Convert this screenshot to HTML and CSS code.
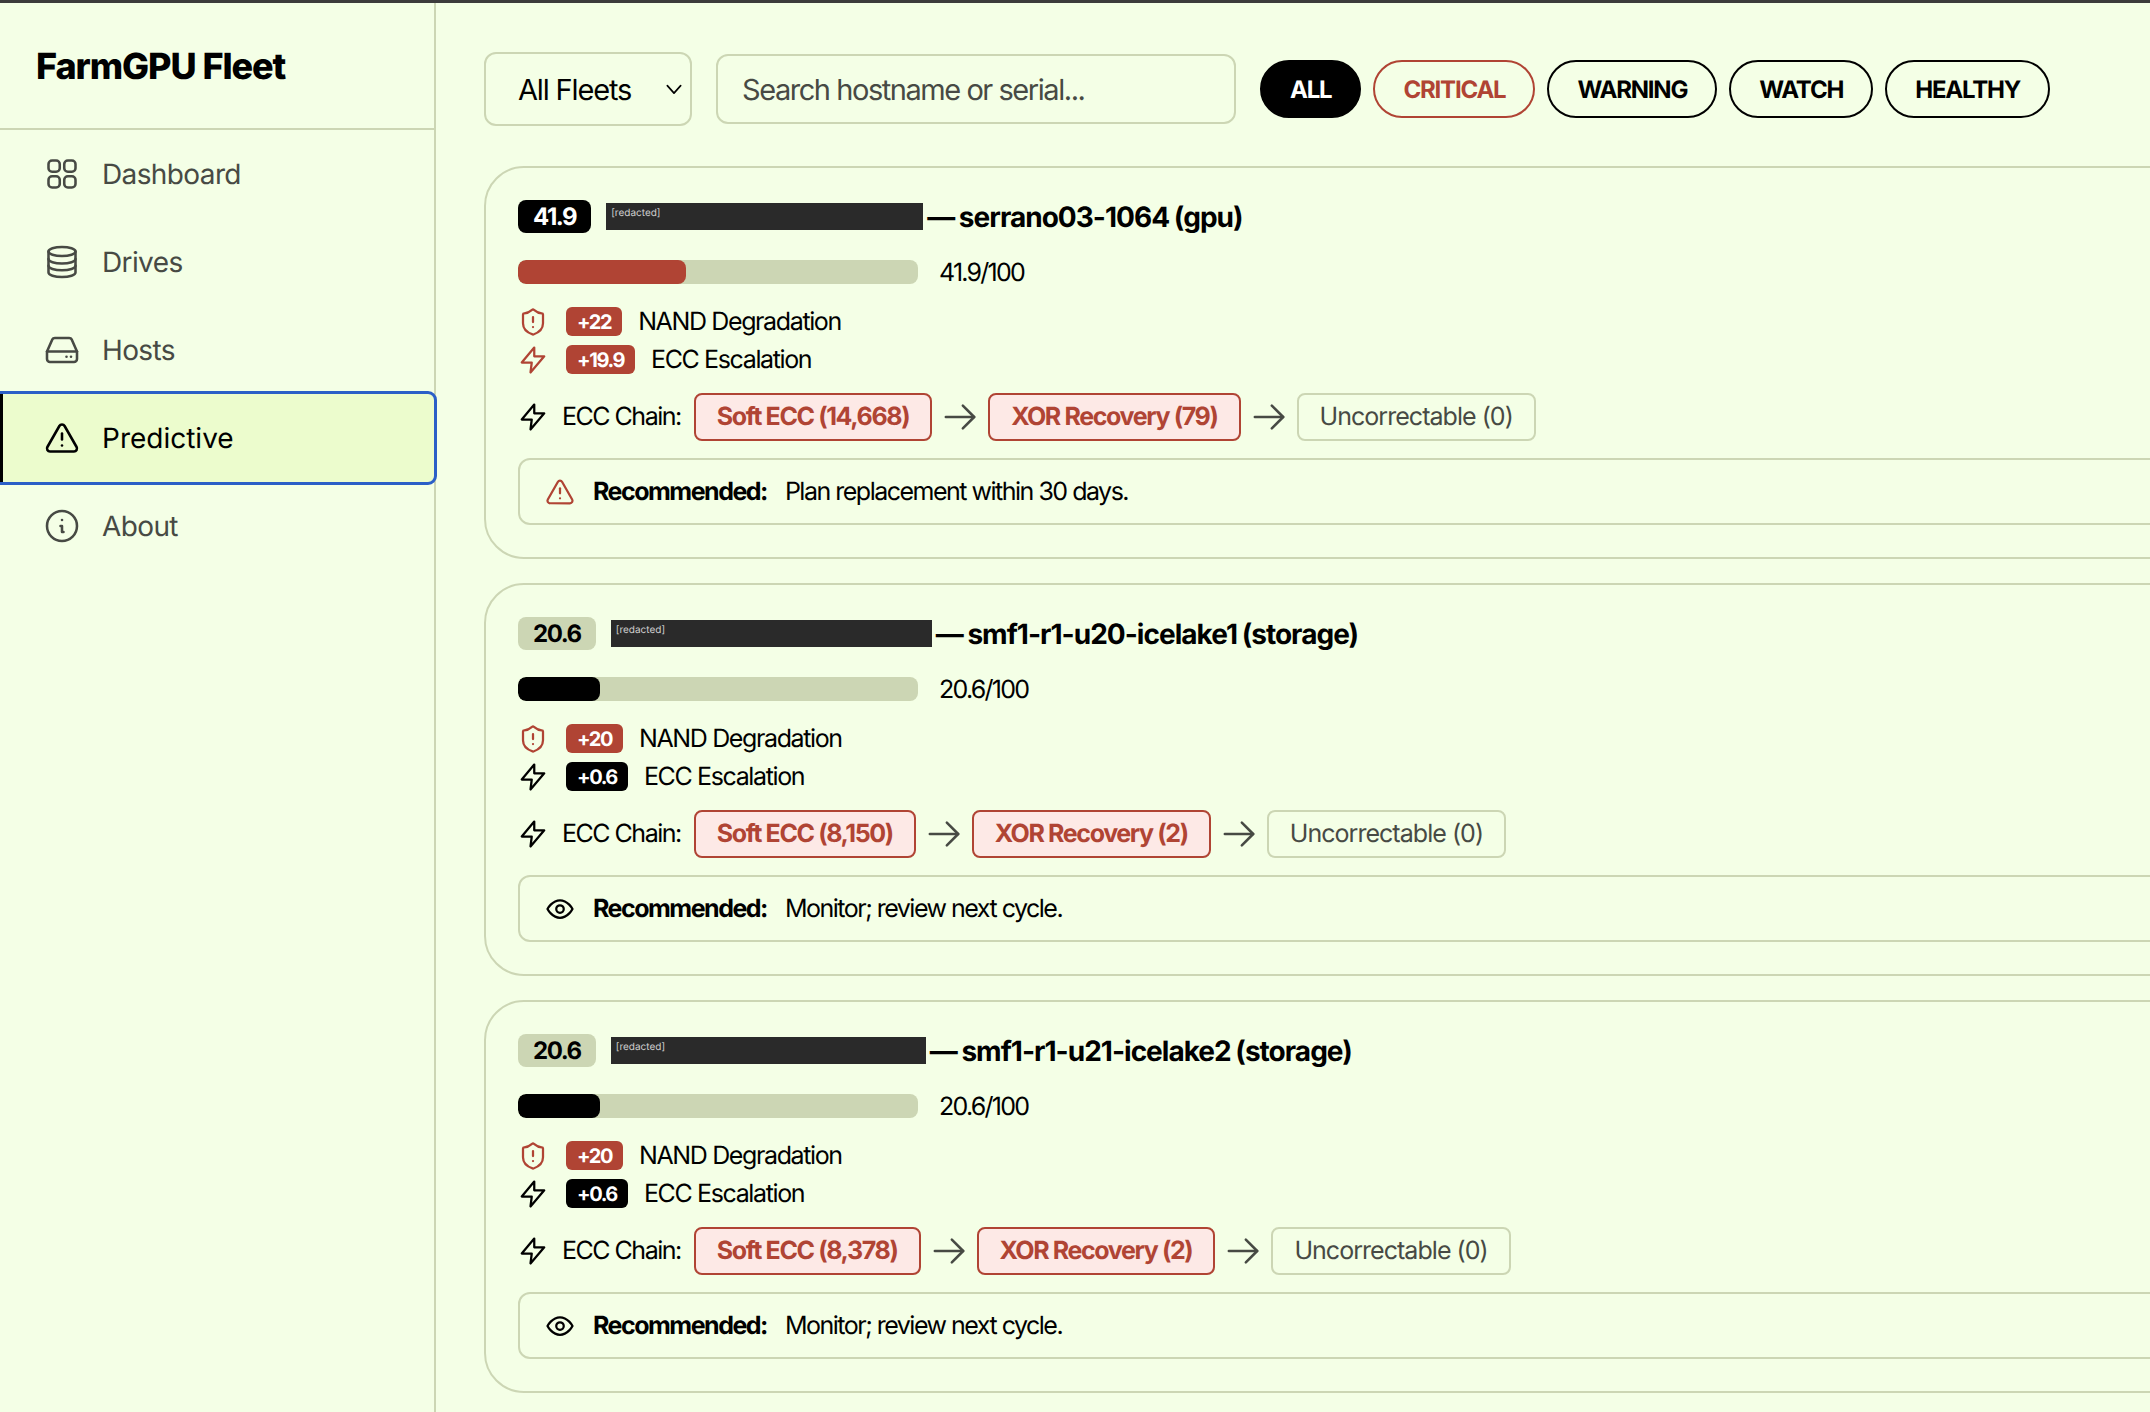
FILE: index.html
```html
<!DOCTYPE html>
<html lang="en">
<head>
<meta charset="utf-8">
<title>FarmGPU Fleet</title>
<link rel="stylesheet" href="styles.css">
</head>
<body>
<svg class="sprite" aria-hidden="true">
  <symbol id="i-grid" viewBox="0 0 24 24"><rect x="3" y="3" width="7.5" height="7.5" rx="2.4"/><rect x="13.5" y="3" width="7.5" height="7.5" rx="2.4"/><rect x="3" y="13.5" width="7.5" height="7.5" rx="2.4"/><rect x="13.5" y="13.5" width="7.5" height="7.5" rx="2.4"/></symbol>
  <symbol id="i-db" viewBox="0 0 24 24"><ellipse cx="12" cy="5" rx="9" ry="3"/><path d="M3 5v14a9 3 0 0 0 18 0V5"/><path d="M3 10a9 3 0 0 0 18 0"/><path d="M3 14.5a9 3 0 0 0 18 0"/></symbol>
  <symbol id="i-drive" viewBox="0 0 24 24"><path d="M22 13H2"/><path d="M5.45 5.11 2 13v5a2 2 0 0 0 2 2h16a2 2 0 0 0 2-2v-5l-3.45-7.89A2 2 0 0 0 16.76 4H7.24a2 2 0 0 0-1.79 1.11z"/><path d="M15 16.5h.01"/><path d="M18 16.5h.01"/></symbol>
  <symbol id="i-tri" viewBox="0 0 24 24"><path d="m21.73 18-8-14a2 2 0 0 0-3.48 0l-8 14A2 2 0 0 0 4 21h16a2 2 0 0 0 1.73-3"/><path d="M12 9v4"/><path d="M12 17h.01"/></symbol>
  <symbol id="i-info" viewBox="0 0 24 24"><circle cx="12" cy="12" r="10"/><path d="M11 12h1v4h1"/><path d="M12 8h.01"/></symbol>
  <symbol id="i-shield" viewBox="0 0 24 24"><path d="M20 13c0 5-3.5 7.5-7.66 8.95a1 1 0 0 1-.67-.01C7.5 20.5 4 18 4 13V6a1 1 0 0 1 1-1c2 0 4.5-1.2 6.24-2.72a1.17 1.17 0 0 1 1.52 0C14.51 3.81 17 5 19 5a1 1 0 0 1 1 1z"/><path d="M12 8v4"/><path d="M12 16h.01"/></symbol>
  <symbol id="i-zap" viewBox="0 0 24 24"><path d="M13 2 3 14h8l-1 8 11-13h-8z"/></symbol>
  <symbol id="i-arrow" viewBox="0 0 24 24"><path d="M2 12h20"/><path d="m14 4 8 8-8 8"/></symbol>
  <symbol id="i-eye" viewBox="0 0 24 24"><path d="M2 12s3.6-7 10-7 10 7 10 7-3.6 7-10 7-10-7-10-7Z"/><circle cx="12" cy="12" r="3"/></symbol>
  <symbol id="i-chev" viewBox="0 0 24 24"><path d="m4 8 8 9 8-9"/></symbol>
</svg>
<div class="app">
  <aside class="sidebar">
    <h1 class="brand">FarmGPU Fleet</h1>
    <nav class="nav">
      <a class="nav-item"><svg class="icon nav-icon"><use href="#i-grid"/></svg>Dashboard</a>
      <a class="nav-item"><svg class="icon nav-icon"><use href="#i-db"/></svg>Drives</a>
      <a class="nav-item"><svg class="icon nav-icon"><use href="#i-drive"/></svg>Hosts</a>
      <a class="nav-item active"><svg class="icon nav-icon"><use href="#i-tri"/></svg>Predictive</a>
      <a class="nav-item"><svg class="icon nav-icon"><use href="#i-info"/></svg>About</a>
    </nav>
  </aside>
  <main class="main">
    <div class="filters">
      <div class="select"><span>All Fleets</span><svg class="icon chev"><use href="#i-chev"/></svg></div>
      <div class="search">Search hostname or serial...</div>
      <div class="pills">
        <span class="pill pill-on">ALL</span>
        <span class="pill pill-crit">CRITICAL</span>
        <span class="pill">WARNING</span>
        <span class="pill">WATCH</span>
        <span class="pill">HEALTHY</span>
      </div>
    </div>

    <section class="card">
      <div class="head">
        <span class="score score-crit">41.9</span>
        <span class="redact w1">[redacted]</span>
        <span class="host">— serrano03-1064 (gpu)</span>
      </div>
      <div class="meter">
        <div class="track"><div class="fill fill-crit" style="width:41.9%"></div></div>
        <span class="meter-val">41.9/100</span>
      </div>
      <div class="factor"><svg class="icon ic-red"><use href="#i-shield"/></svg><span class="delta">+22</span><span>NAND Degradation</span></div>
      <div class="factor f2"><svg class="icon ic-red"><use href="#i-zap"/></svg><span class="delta">+19.9</span><span>ECC Escalation</span></div>
      <div class="chain">
        <svg class="icon"><use href="#i-zap"/></svg><span class="chain-label">ECC Chain:</span>
        <span class="step step-bad">Soft ECC (14,668)</span><svg class="icon ic-arrow"><use href="#i-arrow"/></svg>
        <span class="step step-bad">XOR Recovery (79)</span><svg class="icon ic-arrow"><use href="#i-arrow"/></svg>
        <span class="step">Uncorrectable (0)</span>
      </div>
      <div class="rec"><svg class="icon ic-red"><use href="#i-tri"/></svg><b>Recommended:</b><span>Plan replacement within 30 days.</span></div>
    </section>

    <section class="card">
      <div class="head">
        <span class="score">20.6</span>
        <span class="redact w2">[redacted]</span>
        <span class="host">— smf1-r1-u20-icelake1 (storage)</span>
      </div>
      <div class="meter">
        <div class="track"><div class="fill" style="width:20.6%"></div></div>
        <span class="meter-val">20.6/100</span>
      </div>
      <div class="factor"><svg class="icon ic-red"><use href="#i-shield"/></svg><span class="delta">+20</span><span>NAND Degradation</span></div>
      <div class="factor f2"><svg class="icon"><use href="#i-zap"/></svg><span class="delta delta-k">+0.6</span><span>ECC Escalation</span></div>
      <div class="chain">
        <svg class="icon"><use href="#i-zap"/></svg><span class="chain-label">ECC Chain:</span>
        <span class="step step-bad">Soft ECC (8,150)</span><svg class="icon ic-arrow"><use href="#i-arrow"/></svg>
        <span class="step step-bad">XOR Recovery (2)</span><svg class="icon ic-arrow"><use href="#i-arrow"/></svg>
        <span class="step">Uncorrectable (0)</span>
      </div>
      <div class="rec"><svg class="icon"><use href="#i-eye"/></svg><b>Recommended:</b><span>Monitor; review next cycle.</span></div>
    </section>

    <section class="card">
      <div class="head">
        <span class="score">20.6</span>
        <span class="redact w3">[redacted]</span>
        <span class="host">— smf1-r1-u21-icelake2 (storage)</span>
      </div>
      <div class="meter">
        <div class="track"><div class="fill" style="width:20.6%"></div></div>
        <span class="meter-val">20.6/100</span>
      </div>
      <div class="factor"><svg class="icon ic-red"><use href="#i-shield"/></svg><span class="delta">+20</span><span>NAND Degradation</span></div>
      <div class="factor f2"><svg class="icon"><use href="#i-zap"/></svg><span class="delta delta-k">+0.6</span><span>ECC Escalation</span></div>
      <div class="chain">
        <svg class="icon"><use href="#i-zap"/></svg><span class="chain-label">ECC Chain:</span>
        <span class="step step-bad">Soft ECC (8,378)</span><svg class="icon ic-arrow"><use href="#i-arrow"/></svg>
        <span class="step step-bad">XOR Recovery (2)</span><svg class="icon ic-arrow"><use href="#i-arrow"/></svg>
        <span class="step">Uncorrectable (0)</span>
      </div>
      <div class="rec"><svg class="icon"><use href="#i-eye"/></svg><b>Recommended:</b><span>Monitor; review next cycle.</span></div>
    </section>
  </main>
</div>
</body>
</html>
```
FILE: styles.css
```css
* { box-sizing: border-box; }
html, body { margin: 0; height: 100%; overflow: hidden; }
body {
  background: #f4ffe6;
  color: #000;
  font-family: Inter, "Noto Sans", sans-serif;
  letter-spacing: -0.06em;
  text-rendering: geometricPrecision;
  border-top: 3px solid #3c3c3c;
}
.sprite { display: none; }
.icon {
  width: 30px; height: 30px; flex: none;
  fill: none; stroke: currentColor; stroke-width: 1.8; stroke-linecap: round; stroke-linejoin: round;
}
.app { display: flex; height: 100%; }
.sidebar { width: 436px; flex: none; border-right: 2px solid #ccd6b4; }
.brand {
  margin: 0; height: 127px; padding: 0 0 0 36px;
  display: flex; align-items: center;
  font-size: 36px; font-weight: 800; letter-spacing: -0.03em;
  border-bottom: 2px solid #ccd6b4;
}
.nav { display: flex; flex-direction: column; }
.nav-item {
  height: 88px; padding-left: 44px; display: flex; align-items: center; gap: 22px;
  font-size: 28px; letter-spacing: -0.022em; color: #474a44;
}
.nav-icon { width: 36px; height: 36px; stroke-width: 1.7; }
.nav-item.active {
  background: #ecfccd; color: #000;
  box-shadow: inset 3px 0 0 #000;
  outline: 3px solid #2b5fc7;
  border-radius: 0 6px 6px 0;
  position: relative; width: 434px;
  letter-spacing: 0;
}
.main { flex: none; width: 1900px; padding: 49px 0 0 48px; }
.filters { display: flex; align-items: center; gap: 24px; margin-bottom: 40px; }
.select {
  width: 208px; height: 74px; padding: 0 6px 0 32px;
  border: 2px solid #ccd6b4; border-radius: 12px;
  display: flex; align-items: center; justify-content: space-between;
  font-size: 29px; letter-spacing: -0.04em;
}
.chev { width: 20px; height: 20px; stroke-width: 2; }
.search {
  width: 520px; height: 70px; padding: 0 24px;
  border: 2px solid #ccd6b4; border-radius: 12px;
  display: flex; align-items: center;
  font-size: 29px; letter-spacing: -0.05em; color: #474a44;
}
.pills { display: flex; gap: 12px; }
.pill {
  height: 58px; padding: 0 28px;
  border: 2px solid #000; border-radius: 29px;
  display: flex; align-items: center;
  font-size: 24px; font-weight: 700; letter-spacing: -0.05em;
}
.pill-on { background: #000; color: #fff; }
.pill-crit { border-color: #b04434; color: #b04434; }
.card {
  width: 1900px; height: 393px; margin-bottom: 24px; padding: 32px 32px 0;
  border: 2px solid #ccd6b4; border-radius: 40px;
}
.head { display: flex; align-items: center; height: 33px; }
.score {
  height: 33px; padding: 0 15px; margin-right: 15px; border-radius: 8px;
  display: flex; align-items: center;
  font-size: 24px; font-weight: 700; letter-spacing: -0.06em;
  background: #ccd6b4; color: #000;
}
.score-crit { background: #000; color: #fff; }
.redact {
  height: 27px; padding-left: 5px; margin-right: 4px;
  background: #2a2a2a; color: #cfcfcf;
  font-size: 10px; font-weight: 400; line-height: 20px; letter-spacing: 0;
}
.w1 { width: 317px; }
.w2 { width: 321px; }
.w3 { width: 315px; }
.host { font-size: 28px; font-weight: 700; letter-spacing: -0.035em; word-spacing: -1px; }
.meter { display: flex; align-items: center; gap: 21px; margin-top: 27px; height: 24px; }
.track { width: 400px; height: 24px; background: #ccd6b4; border-radius: 8px; overflow: hidden; }
.fill { height: 100%; background: #000; border-radius: 8px; }
.fill-crit { background: #b04434; }
.meter-val { font-size: 25px; letter-spacing: -0.07em; padding-top: 2px; }
.factor {
  display: flex; align-items: center; height: 29px; margin-top: 23px;
  font-size: 25px; letter-spacing: -0.055em;
}
.factor.f2 { margin-top: 9px; }
.factor .icon { margin-right: 18px; }
.delta {
  height: 29px; padding: 0 11px; margin-right: 16px; border-radius: 6px;
  display: flex; align-items: center;
  background: #b04434; color: #fff; font-size: 20px; font-weight: 700; letter-spacing: -0.07em;
}
.delta-k { background: #000; }
.ic-red { color: #b04434; }
.chain { display: flex; align-items: center; margin-top: 19px; height: 48px; font-size: 25px; }
.chain-label { margin: 0 13px 0 14px; letter-spacing: -0.06em; }
.ic-arrow { width: 34px; height: 34px; color: #474a44; margin: 0 11px; }
.step {
  height: 48px; padding: 0 21px; border: 2px solid #ccd6b4; border-radius: 8px;
  display: flex; align-items: center;
  color: #474a44;
}
.step-bad { background: #fde9e6; border-color: #b04434; color: #b04434; font-weight: 700; letter-spacing: -0.055em; }
.rec {
  display: flex; align-items: center; height: 67px; margin-top: 17px; padding-left: 25px;
  border: 2px solid #ccd6b4; border-radius: 12px;
  font-size: 25px; letter-spacing: -0.06em;
}
.rec b { margin: 0 18px 0 18px; font-weight: 700; letter-spacing: -0.06em; }
```
